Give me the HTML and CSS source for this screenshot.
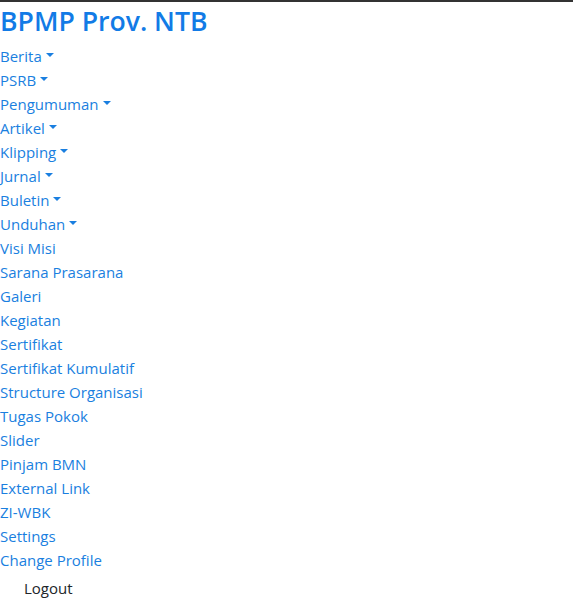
FILE: index.html
```html
<!DOCTYPE html>
<html>
<head>
<meta charset="utf-8">
<link rel="stylesheet" href="styles.css">
</head>
<body>
<div class="topline"></div>
<a class="brand" href="#">BPMP Prov. NTB</a>
<ul class="nav">
<li><a class="dd" href="#">Berita</a></li>
<li><a class="dd" href="#">PSRB</a></li>
<li><a class="dd" href="#">Pengumuman</a></li>
<li><a class="dd" href="#">Artikel</a></li>
<li><a class="dd" href="#">Klipping</a></li>
<li><a class="dd" href="#">Jurnal</a></li>
<li><a class="dd" href="#">Buletin</a></li>
<li><a class="dd" href="#">Unduhan</a></li>
<li><a href="#">Visi Misi</a></li>
<li><a href="#">Sarana Prasarana</a></li>
<li><a href="#">Galeri</a></li>
<li><a href="#">Kegiatan</a></li>
<li><a href="#">Sertifikat</a></li>
<li><a href="#">Sertifikat Kumulatif</a></li>
<li><a href="#">Structure Organisasi</a></li>
<li><a href="#">Tugas Pokok</a></li>
<li><a href="#">Slider</a></li>
<li><a href="#">Pinjam BMN</a></li>
<li><a href="#">External Link</a></li>
<li><a href="#">ZI-WBK</a></li>
<li><a href="#">Settings</a></li>
<li><a href="#">Change Profile</a></li>
</ul>
<ul class="logout"><li>Logout</li></ul>
</body>
</html>
```
FILE: styles.css
```css
body {
  margin: 0;
  font-family: "Open Sans", sans-serif;
  font-size: 15px;
  line-height: 24px;
  color: #212529;
  background: #fff;
}
.topline {
  height: 2px;
  background: #333;
}
.brand {
  display: block;
  color: #127be6;
  text-decoration: none;
  font-size: 26.6px;
  font-weight: 600;
  line-height: 38px;
  margin-top: 0;
}
.nav {
  list-style: none;
  margin: 4px 0 0 0;
  padding: 0;
}
.nav li a {
  color: #1a7fe0;
  text-decoration: none;
  display: inline-flex;
  align-items: center;
}
.dd::after {
  content: "";
  display: inline-block;
  margin-left: 4px;
  border-top: 4px solid #1a7fe0;
  border-left: 4px solid transparent;
  border-right: 4px solid transparent;
  margin-top: -2px;
}
.logout {
  margin: 4px 0 0 0;
  padding: 0 0 0 24px;
  list-style: none;
}
```
